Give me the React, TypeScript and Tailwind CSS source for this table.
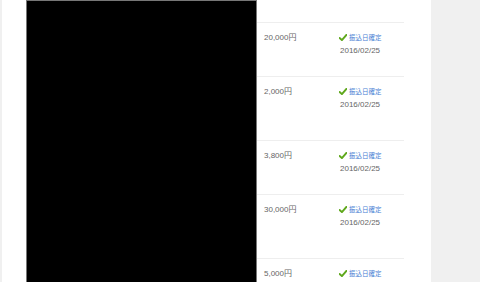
import React from "react";

const rows = [
  { amount: "20,000円", h: "h-[54px]" },
  { amount: "2,000円", h: "h-[64px]" },
  { amount: "3,800円", h: "h-[54px]" },
  { amount: "30,000円", h: "h-[64px]" },
  { amount: "5,000円", h: "h-[64px]" },
];

function Check() {
  return (
    <svg width="8" height="7" viewBox="0 0 8 7" className="shrink-0">
      <path d="M0.6 3.9 L2.9 6.2 L7.4 0.9" fill="none" stroke="#5fa81c" strokeWidth="1.9" strokeLinecap="round" strokeLinejoin="round" />
    </svg>
  );
}

export default function App() {
  return (
    <div className="flex w-[480px] h-[282px] overflow-hidden bg-[#f0f0f0]" style={{ fontFamily: '"Liberation Sans", "Noto Sans CJK JP", sans-serif' }}>
      <div className="w-[2px] shrink-0 bg-[#f0f0f0]" />
      <div className="w-[429px] shrink-0 bg-white flex pl-[24px]">
        <div className="w-[231px] h-[400px] shrink-0 bg-black border-l border-r border-t border-[#777]" />
        <div className="w-[147px] shrink-0 flex flex-col">
          <div className="h-[22px] shrink-0" />
          {rows.map((r, i) => (
            <div key={i} className={`flex shrink-0 ${r.h} border-t border-[#eeeeee]`}>
              <div className="w-[78px] pl-[7px] pt-[9px] text-[8px] leading-[11px] text-[#666]">{r.amount}</div>
              <div className="w-[69px] pl-[4px] pt-[9px]">
                <div className="flex items-center gap-[2px] h-[11px]">
                  <Check />
                  <span className="text-[6.5px] text-[#4a7fd4] leading-[11px]">振込日確定</span>
                </div>
                <div className="text-[8px] leading-[11px] text-[#666] mt-[2px] pl-[1px]">2016/02/25</div>
              </div>
            </div>
          ))}
        </div>
      </div>
    </div>
  );
}
